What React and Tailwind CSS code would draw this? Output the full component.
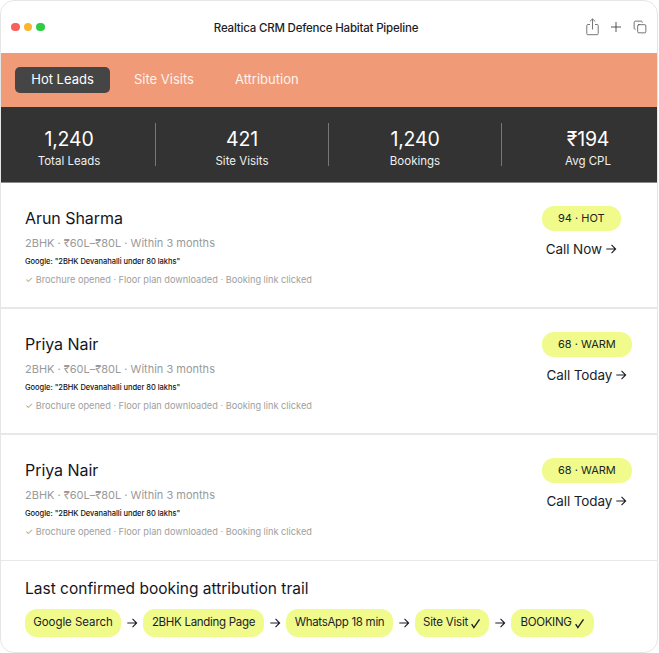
import React from "react";
import { Plus, Copy } from "lucide-react";

const Arrow = ({ size = 14, className = "" }) => (
  <svg width={size} height={size} viewBox="0 0 14 14" fill="none" stroke="currentColor" strokeWidth="1.3" className={className}>
    <path d="M1.5 7H12.3M7.6 2.2 12.4 7 7.6 11.8" />
  </svg>
);

const Check = ({ size = 11, className = "" }) => (
  <svg width={size} height={size} viewBox="0 0 12 12" fill="none" stroke="currentColor" strokeWidth="1.5" className={className}>
    <path d="M1.8 6.8 4.2 10.4 10.4 1.6" />
  </svg>
);

const ShareIcon = () => (
  <svg width="13" height="18" viewBox="0 0 13 18" fill="none" stroke="#777" strokeWidth="1" strokeLinejoin="round">
    <path d="M4 6.5H1.8a1 1 0 0 0-1 1v8.2a1 1 0 0 0 1 1h9.4a1 1 0 0 0 1-1V7.500a1 1 0 0 0-1-1H9" />
    <path d="M6.500 11.500V1M3.800 3.500 6.500 .9 9.200 3.500" />
  </svg>
);

const stats = [
  ["1,240", "Total Leads"],
  ["421", "Site Visits"],
  ["1,240", "Bookings"],
  ["₹194", "Avg CPL"],
];

const leads = [
  { name: "Arun Sharma", badge: "94 · HOT", action: "Call Now" },
  { name: "Priya Nair", badge: "68 · WARM", action: "Call Today" },
  { name: "Priya Nair", badge: "68 · WARM", action: "Call Today" },
];

const trail = [
  ["Google Search", "w-[96px]", "tracking-[-0.05px]"],
  ["2BHK Landing Page", "w-[121px]", "tracking-[-0.3px]"],
  ["WhatsApp 18 min", "w-[107px]", "tracking-[-0.3px]"],
  ["Site Visit", "w-[74px]", "tracking-[-0.2px]"],
  ["BOOKING", "w-[83px]", "tracking-[-0.3px]"],
];

function Lead({ name, badge, action, last }) {
  return (
    <div className={`h-[126px] shrink-0 flex justify-between pl-6 pr-[23px] pt-[25px] ${last ? "border-b border-[#e8e8e8]" : "border-b-2 border-[#e8e8e8]"}`}>
      <div className="flex flex-col">
        <div className="text-[16px] leading-[20px] text-[#14161f] tracking-[-0.05px]">{name}</div>
        <div className="text-[11px] leading-[16px] text-[#9a9a9a] mt-[7px]">2BHK · ₹60L–₹80L · Within 3 months</div>
        <div className="text-[7.5px] leading-[10px] text-[#111] mt-[6px] font-medium tracking-[-0.03px]">Google: "2BHK Devanahalli under 80 lakhs"</div>
        <div className="text-[9.2px] leading-[12px] text-[#a0a0a0] mt-[7px]">✓ Brochure opened · Floor plan downloaded · Booking link clicked</div>
      </div>
      <div className="w-[92px] -mt-[2px] shrink-0">
        <div className="w-fit flex flex-col items-center">
          <div className="h-[25px] px-4 flex items-center rounded-[12px] bg-[#f0fb8c] text-[11px] text-[#22241c] whitespace-nowrap">{badge}</div>
          <div className="flex items-center gap-[3px] mt-[9px] text-[13.5px] leading-[18px] text-[#1b1d29] whitespace-nowrap tracking-[-0.1px]">
            {action}
            <Arrow size={12} />
          </div>
        </div>
      </div>
    </div>
  );
}

export default function App() {
  return (
    <div className="w-[659px] h-[653px] bg-white font-['Inter',sans-serif]">
      <div className="w-[658px] h-[653px] border border-[#e6e6e6] rounded-[14px] overflow-hidden flex flex-col bg-white">
        <div className="h-[52px] shrink-0 flex items-center justify-between pl-[10px] pr-[10px] relative">
          <div className="flex gap-[4px]">
            <span className="w-[8.5px] h-[8.5px] rounded-full bg-[#f95f5b]" />
            <span className="w-[8.5px] h-[8.5px] rounded-full bg-[#f9b52d]" />
            <span className="w-[8.5px] h-[8.5px] rounded-full bg-[#2ecc40]" />
          </div>
          <div className="absolute left-0 top-[20px] w-[630px] text-center text-[11.5px] leading-[14px] font-medium text-[#1b1d29] tracking-[-0.2px]">Realtica CRM Defence Habitat Pipeline</div>
          <div className="flex items-center gap-[9px] text-[#3a3a3a]">
            <ShareIcon />
            <Plus size={16} strokeWidth={1.3} />
            <Copy size={14} strokeWidth={1.2} />
          </div>
        </div>

        <div className="h-[54px] shrink-0 bg-[#f09a78] flex items-center pl-[14px] text-[13px] text-white">
          <div className="w-[95px] h-[26px] rounded-[5px] bg-[#454545] flex items-center justify-center">Hot Leads</div>
          <div className="ml-[24px] text-[#fff3ec]">Site Visits</div>
          <div className="ml-[41px] text-[#fff3ec]">Attribution</div>
        </div>

        <div className="h-[76px] shrink-0 bg-[#333333] flex items-center gap-[18px] border-b border-[#8a8a8a]">
          {stats.map(([v, l], i) => (
            <React.Fragment key={l}>
              <div className="w-[136px] shrink-0 mt-[6px] flex flex-col items-center">
                <div className="text-[19.5px] leading-[24px] text-white tracking-[-0.2px]">{v}</div>
                <div className="text-[11.5px] leading-[15px] text-[#f0f0f0] mt-[3px]">{l}</div>
              </div>
              {i < 3 && <div className="w-px h-[43px] bg-[#777] shrink-0" />}
            </React.Fragment>
          ))}
        </div>

        {leads.map((l, i) => (
          <Lead key={i} {...l} last={i === 2} />
        ))}

        <div className="flex-1 pl-6 pt-[18px]">
          <div className="text-[15.500px] leading-[20px] text-[#14161f]">Last confirmed booking attribution trail</div>
          <div className="flex items-center mt-[10px]">
            {trail.map(([t, w, tr], i) => (
              <React.Fragment key={t}>
                <div className={`h-[28px] ${w} ${tr} flex items-center justify-center gap-[2px] rounded-[12px] bg-[#f0fb8c] text-[11.5px] text-[#1b1d29] whitespace-nowrap`}>
                  {t}
                  {i >= 3 && <Check />}
                </div>
                {i < 4 && (
                  <div className="w-[22px] flex justify-center text-[#1b1d29]">
                    <Arrow size={12} />
                  </div>
                )}
              </React.Fragment>
            ))}
          </div>
        </div>
      </div>
    </div>
  );
}
